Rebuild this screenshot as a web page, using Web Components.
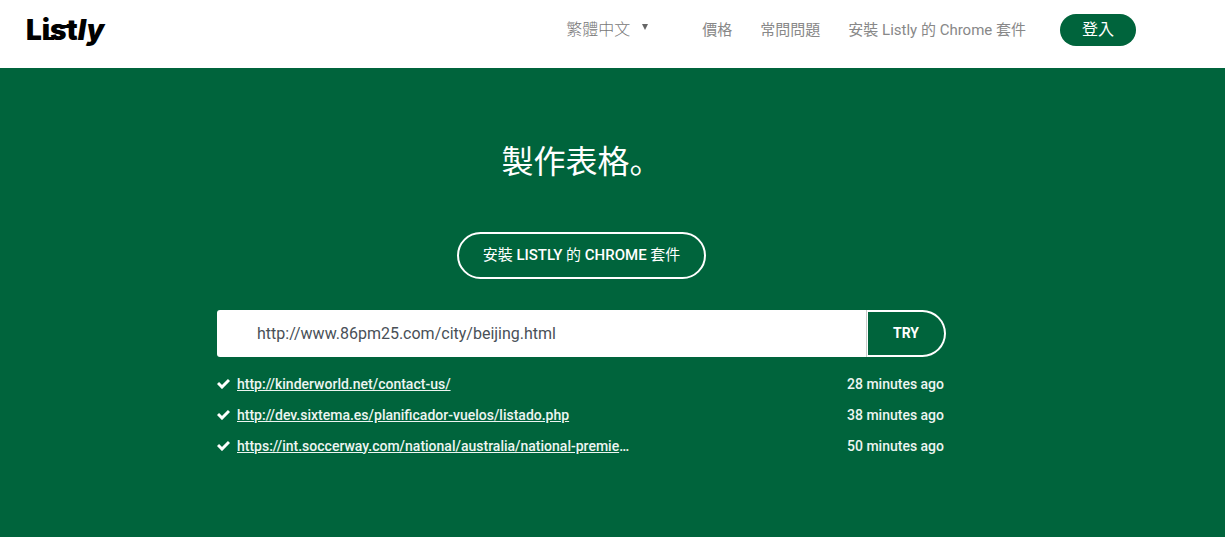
<!DOCTYPE html>
<html lang="zh-Hant">
<head>
<meta charset="utf-8">
<title>Listly</title>
<style>
  body {
    margin: 0;
    background: #fff;
    font-family: Roboto, "Noto Sans CJK TC", sans-serif;
    --green: #00643c;
  }
</style>
</head>
<body>
<listly-header>
  <listly-language slot="language"></listly-language>
  <listly-nav-link href="#price">價格</listly-nav-link>
  <listly-nav-link href="#faq">常問問題</listly-nav-link>
  <listly-nav-link href="#install">安裝 Listly 的 Chrome 套件</listly-nav-link>
  <listly-login slot="action">登入</listly-login>
</listly-header>
<listly-hero>
  <span slot="title" lang="zh-Hans">製作表格。</span>
  <listly-install slot="install">安裝 <b>Listly</b> 的 <b>Chrome</b> 套件</listly-install>
  <listly-url-form value="http://www.86pm25.com/city/beijing.html"></listly-url-form>
  <div>
    <listly-recent href="http://kinderworld.net/contact-us/" time="28 minutes ago">http://kinderworld.net/contact-us/</listly-recent>
    <listly-recent href="http://dev.sixtema.es/planificador-vuelos/listado.php" time="38 minutes ago">http://dev.sixtema.es/planificador-vuelos/listado.php</listly-recent>
    <listly-recent href="https://int.soccerway.com/national/australia/national-premier-leagues/" time="50 minutes ago">https://int.soccerway.com/national/australia/national-premie<span slot="more">…</span></listly-recent>
  </div>
</listly-hero>

<script>
const define = (name, render) => customElements.define(name, class extends HTMLElement {
  connectedCallback() {
    if (this.shadowRoot) return;
    this.attachShadow({ mode: 'open' }).innerHTML = render(this);
  }
});

define('listly-logo', () => `
  <style>
    :host { display: block; }
    a { display: block; color: #000; }
    svg { display: block; }
    text { font: 900 28px Inter, sans-serif; }
    .slant { font-style: italic; }
  </style>
  <a href="#" aria-label="Listly">
    <svg width="84" height="36" viewBox="0 0 84 36" fill="currentColor">
      <text x="0" y="26">List<tspan class="slant">ly</tspan></text>
      <path d="M20 23H28V26H20ZM34 11H44V14H34Z"/>
    </svg>
  </a>`);

define('listly-language', () => `
  <style>
    :host { display: block; position: relative; }
    select {
      appearance: none; display: block; width: 86px; height: 32px; padding: 0;
      border: 0; background: none; color: #777;
      font: 300 16px/32px Roboto, "Noto Sans CJK TC", sans-serif;
    }
    svg { position: absolute; right: 4px; top: 10px; pointer-events: none; }
  </style>
  <select aria-label="語言"><option>繁體中文</option></select>
  <svg width="6" height="6" viewBox="0 0 6 6" fill="#666" aria-hidden="true"><path d="M0 0H6L3 6Z"/></svg>`);

define('listly-nav-link', el => `
  <style>
    :host { display: block; }
    a { color: #888; text-decoration: none; font-weight: 400; font-size: 15px; line-height: 32px; white-space: nowrap; }
  </style>
  <a href="${el.getAttribute('href')}"><slot></slot></a>`);

define('listly-login', () => `
  <style>
    :host { display: block; }
    button {
      display: block; width: 76px; height: 32px; padding: 0; border: 0; border-radius: 16px;
      background: var(--green); color: #fff; font: 400 16px/32px Roboto, "Noto Sans CJK TC", sans-serif;
    }
  </style>
  <button type="button"><slot></slot></button>`);

define('listly-header', () => `
  <style>
    :host { display: block; background: #fff; }
    header {
      display: flex; align-items: flex-start; box-sizing: border-box;
      min-height: 68px; padding: 14px 89px 0 26px;
    }
    nav { display: flex; gap: 28px; margin: 0 34px 0 50px; }
    .end { display: flex; margin-left: auto; }
  </style>
  <header>
    <listly-logo></listly-logo>
    <div class="end">
      <slot name="language"></slot>
      <nav><slot></slot></nav>
      <slot name="action"></slot>
    </div>
  </header>`);

define('listly-install', () => `
  <style>
    :host { display: block; }
    ::slotted(b) { font-weight: 500; }
    button {
      display: block; min-width: 249px; height: 47px; padding: 0 24px 2px; border: 2px solid #fff; border-radius: 24px;
      background: none; color: #fff; text-transform: uppercase; white-space: nowrap;
      font: 400 15px/20px Roboto, "Noto Sans CJK TC", sans-serif;
    }
  </style>
  <button type="button"><slot></slot></button>`);

define('listly-url-form', el => `
  <style>
    :host { display: block; margin-bottom: 11px; }
    form { display: flex; height: 47px; }
    input {
      flex: 1; min-width: 0; box-sizing: border-box; padding: 0 40px; border: 0;
      border-right: 1px solid #ccc; border-radius: 3px 0 0 3px; background: #fff; color: #495057;
      font: 400 16px/24px Roboto, sans-serif;
    }
    button {
      width: 79px; padding: 0 0 2px; border: 2px solid #fff; border-left-width: 1px;
      border-radius: 0 24px 24px 0; background: none; color: #fff;
      font: 700 14px/20px Roboto, sans-serif;
    }
  </style>
  <form onsubmit="return false">
    <input type="text" aria-label="URL" value="${el.getAttribute('value')}">
    <button type="submit">TRY</button>
  </form>`);

define('listly-recent', el => `
  <style>
    :host {
      display: flex; align-items: center; height: 31px; padding-right: 2px;
      color: #edf5f1; font-weight: 500; font-size: 14px; line-height: 20px;
    }
    svg { flex: none; margin-right: 7px; }
    a { color: inherit; white-space: nowrap; }
    time { margin-left: auto; white-space: nowrap; }
  </style>
  <svg width="13" height="11" viewBox="0 0 13 11" fill="none" stroke="#fff" stroke-width="3" aria-hidden="true"><path d="M1 5L5 9L12 2"/></svg>
  <a href="${el.getAttribute('href')}"><slot></slot></a><slot name="more"></slot>
  <time>${el.getAttribute('time')}</time>`);

define('listly-hero', () => `
  <style>
    :host { display: block; background: var(--green); color: #fff; }
    main {
      display: flex; flex-direction: column; align-items: center;
      padding: 67px 62px 76px 0;
    }
    h1 {
      margin: 0 0 49px; font-weight: 400; font-size: 32px; line-height: 48px;
      font-family: "Noto Sans CJK SC", sans-serif;
    }
    .list { width: 100%; max-width: 729px; margin-top: 31px; }
  </style>
  <main>
    <h1><slot name="title"></slot></h1>
    <slot name="install"></slot>
    <div class="list"><slot></slot></div>
  </main>`);
</script>
</body>
</html>
